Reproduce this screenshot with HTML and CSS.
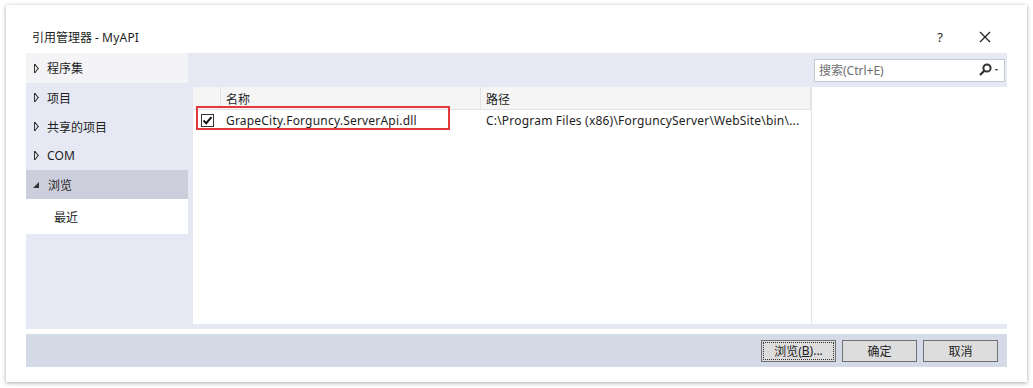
FILE: index.html
```html
<!DOCTYPE html>
<html lang="zh-CN">
<head>
  <meta charset="UTF-8">
  <meta name="viewport" content="width=device-width, initial-scale=1.0">
  <title>引用管理器 - MyAPI</title>
  <link rel="stylesheet" href="styles.css">
</head>

<body>
  <div class="dialog">
    <div class="title-bar">
      <span class="title">引用管理器 - <span class="latin">MyAPI</span></span>
      <div class="title-buttons">
        <span class="help">?</span>
        <svg class="close" width="12" height="12" viewBox="0 0 12 12">
          <path d="M1 1 L11 11 M11 1 L1 11" stroke="#1e1e1e" stroke-width="1.2" fill="none"/>
        </svg>
      </div>
    </div>

    <div class="main">
      <!-- left navigation -->
      <div class="nav">
        <div class="nav-item hover"><span class="arrow closed"></span>程序集</div>
        <div class="nav-item"><span class="arrow closed"></span>项目</div>
        <div class="nav-item"><span class="arrow closed"></span>共享的项目</div>
        <div class="nav-item"><span class="arrow closed"></span><span class="latin">COM</span></div>
        <div class="nav-item selected"><span class="arrow open"></span>浏览</div>
        <div class="nav-sub">最近</div>
      </div>

      <div class="content">
        <div class="search-row">
          <div class="search-box">
            <span class="placeholder">搜索(Ctrl+E)</span>
            <svg width="22" height="14" viewBox="0 0 22 14">
              <circle cx="9" cy="5" r="3.6" stroke="#333" stroke-width="2" fill="none"/>
              <path d="M6.4 7.6 L2 12" stroke="#333" stroke-width="2.2" fill="none"/>
              <path d="M16.5 6 L20.5 6 L18.5 8 Z" fill="#555"/>
            </svg>
          </div>
        </div>

        <div class="panes">
          <div class="list">
            <div class="list-row header">
              <div class="cell check"></div>
              <div class="cell name">名称</div>
              <div class="cell path">路径</div>
            </div>
            <div class="list-row">
              <div class="cell check">
                <svg width="13" height="13" viewBox="0 0 13 13">
                  <rect x="0.5" y="0.5" width="12" height="12" fill="#fff" stroke="#333"/>
                  <path d="M2.5 6.5 L5.2 9.2 L10.5 3.2" stroke="#111" stroke-width="2" fill="none"/>
                </svg>
              </div>
              <div class="cell name latin">GrapeCity.Forguncy.ServerApi.dll</div>
              <div class="cell path latin">C:\Program Files (x86)\ForguncyServer\WebSite\bin\...</div>
            </div>
            <div class="highlight"></div>
          </div>
          <div class="details"></div>
        </div>
      </div>
    </div>

    <div class="button-bar">
      <button class="btn focused"><span>浏览(<u>B</u>)...</span></button>
      <button class="btn">确定</button>
      <button class="btn">取消</button>
    </div>
  </div>
</body>
</html>
```

FILE: styles.css
```css
/* Global */
body {
  margin: 0;
  background: #ffffff;
  font-family: "Noto Sans", "Noto Sans CJK SC", sans-serif;
  font-size: 12px;
  color: #1e1e1e;
}

.latin {
  letter-spacing: 0.2px;
}

.dialog {
  margin: 5px 6px;
  width: 1021px;
  height: 377px;
  background: #ffffff;
  box-shadow: 0 1px 4px rgba(0, 0, 0, 0.35);
  display: flex;
  flex-direction: column;
  padding: 0 20px;
  box-sizing: border-box;
}

/* Title */
.title-bar {
  height: 48px;
  display: flex;
  align-items: flex-end;
  justify-content: space-between;
  padding-left: 6px;
}

.title {
  padding-bottom: 7px;
}

.title-buttons {
  display: flex;
  align-items: center;
  gap: 36px;
  padding-bottom: 10px;
  padding-right: 16px;
}

.help {
  font-size: 13px;
  line-height: 12px;
}

/* Main area */
.main {
  height: 276px;
  display: flex;
  background: #e6e9f3;
}

.nav {
  width: 162px;
  flex-shrink: 0;
}

.nav-item {
  height: 29px;
  display: flex;
  align-items: center;
  padding-left: 8px;
}

.nav-item.hover {
  background: #f4f4f6;
  height: 30px;
}

.nav-item.selected {
  background: #cccfdb;
}

.nav-sub {
  height: 35px;
  background: #ffffff;
  display: flex;
  align-items: center;
  padding-left: 28px;
}

.arrow {
  width: 0;
  height: 0;
  margin-right: 8px;
  box-sizing: border-box;
}

.arrow.closed {
  width: 5px;
  height: 9px;
  border-left: 1px solid #333;
  position: relative;
  overflow: hidden;
}

.arrow.closed::after {
  content: "";
  position: absolute;
  left: -4px;
  top: 1px;
  width: 6px;
  height: 6px;
  border-top: 1px solid #333;
  border-right: 1px solid #333;
  transform: rotate(45deg) skew(8deg, 8deg);
}

.arrow.open {
  border-left: 6px solid transparent;
  border-bottom: 6px solid #333;
  margin-left: -1px;
  margin-right: 9px;
}

.content {
  flex: 1;
  display: flex;
  flex-direction: column;
}

.search-row {
  height: 34px;
  display: flex;
  justify-content: flex-end;
  align-items: center;
  padding-right: 2px;
}

.search-box {
  width: 191px;
  height: 23px;
  box-sizing: border-box;
  border: 1px solid #c4c8d3;
  background: #ffffff;
  display: flex;
  align-items: center;
  justify-content: space-between;
  padding: 0 4px 0 4px;
}

.placeholder {
  color: #6d6d6d;
}

.panes {
  flex: 1;
  display: flex;
  padding: 0 0 5px 5px;
}

.list {
  width: 618px;
  background: #ffffff;
  position: relative;
}

.list-row {
  display: flex;
  height: 21px;
}

.list-row.header {
  height: 22px;
  background: #f5f5f5;
  border-bottom: 1px solid #e2e2e2;
}

.cell {
  display: flex;
  align-items: center;
  box-sizing: border-box;
}

.cell.check {
  width: 28px;
  padding-left: 8px;
}

.cell.name {
  width: 260px;
  padding-left: 5px;
}

.cell.path {
  flex: 1;
  padding-left: 5px;
}

.header .cell {
  border-right: 1px solid #e2e2e2;
  align-items: flex-end;
  padding-bottom: 1px;
}

/* red annotation box */
.highlight {
  position: absolute;
  left: 3px;
  top: 19px;
  width: 254px;
  height: 24px;
  border: 2px solid #e2393d;
  box-sizing: border-box;
}

.details {
  flex: 1;
  background: #ffffff;
  border-left: 1px solid #e2e2e2;
}

/* Buttons */
.button-bar {
  height: 33px;
  margin-top: 5px;
  background: #d5dae7;
  display: flex;
  justify-content: flex-end;
  align-items: center;
  gap: 6px;
  padding-right: 9px;
}

.btn {
  width: 75px;
  height: 22px;
  background: #dddddd;
  border: 1px solid #707070;
  font-family: "Noto Sans", "Noto Sans CJK SC", sans-serif;
  font-size: 12px;
  color: #1e1e1e;
  padding: 0;
}

.btn.focused {
  padding: 1px;
}

.btn.focused span {
  display: flex;
  align-items: center;
  justify-content: center;
  height: 100%;
  border: 1px dotted #333;
  box-sizing: border-box;
}
```
